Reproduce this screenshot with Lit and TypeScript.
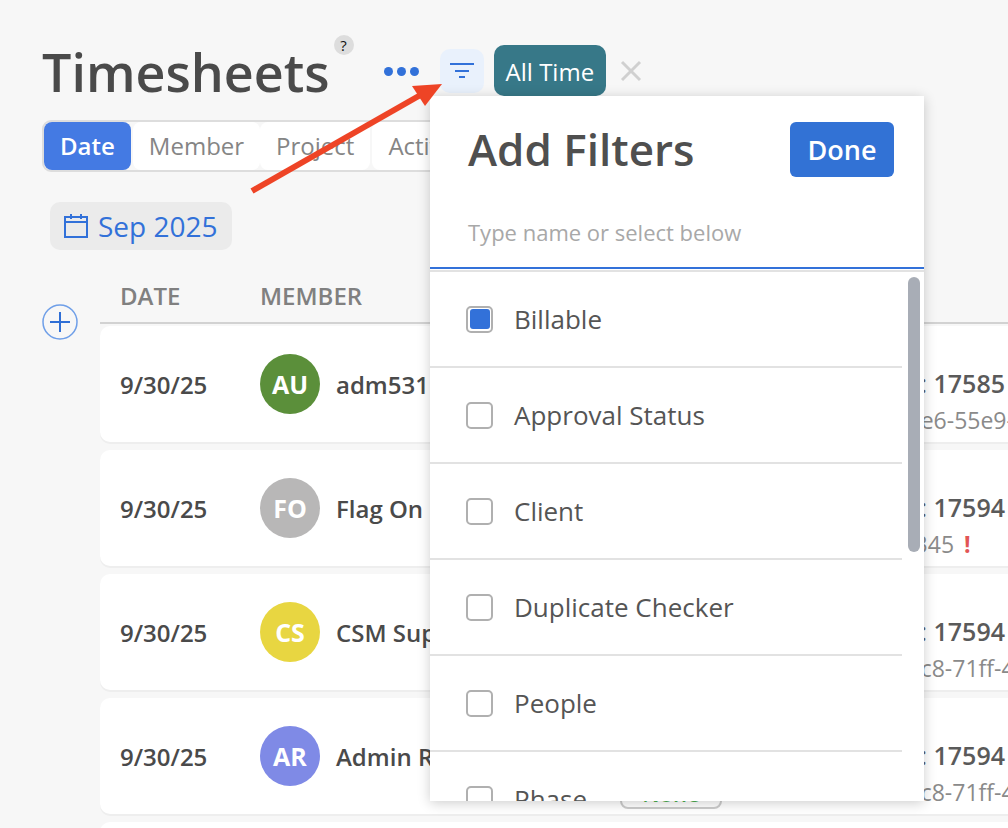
import { LitElement, css, html, svg } from "lit";
import { customElement } from "lit/decorators.js";

const rows = [
    { date: "9/30/25", initials: "AU", color: "#5b8f3a", name: "adm531 User Admin", id: "17585", sub: "Phase: 7d3af1b2ae6-55e9-4b10", flag: false },
    { date: "9/30/25", initials: "FO", color: "#b8b7b7", name: "Flag On User", id: "17594", sub: "Phase: 7d0d8d50345", flag: true },
    { date: "9/30/25", initials: "CS", color: "#e8d641", name: "CSM Support", id: "17594", sub: "Phase: 766a9-bd2c8-71ff-4c21", flag: false },
    { date: "9/30/25", initials: "AR", color: "#7f8ae6", name: "Admin Role", id: "17594", sub: "Phase: 766a9-bd2c8-71ff-4c21", flag: false },
];

const filters = ["Billable", "Approval Status", "Client", "Duplicate Checker", "People", "Phase"];

@customElement("time-row")
export class TimeRow extends LitElement {
    static properties = { row: { attribute: false } };
    row: any;

    static styles = css`
        :host {
            display: flex;
            align-items: center;
            height: 116px;
            flex: none;
            background-color: white;
            border-radius: 10px;
            box-shadow: 0 2px 0 #eeeeee;
            white-space: nowrap;
            color: #4a4a4a;
        }
        .date {
            width: 160px;
            padding-left: 20px;
            box-sizing: border-box;
            font-size: 24px;
            font-weight: 600;
        }
        .avatar {
            width: 60px;
            height: 60px;
            border-radius: 50%;
            display: flex;
            align-items: center;
            justify-content: center;
            color: white;
            font-size: 25px;
            font-weight: 700;
            flex: none;
        }
        .name {
            width: 300px;
            padding-left: 16px;
            box-sizing: border-box;
            font-size: 24px;
            font-weight: 600;
            overflow: hidden;
        }
        .info {
            display: flex;
            flex-direction: column;
            gap: 6px;
            padding-top: 34px;
        }
        .top {
            font-size: 25px;
            line-height: 32px;
            color: #5a5a5a;
        }
        .top span {
            display: inline-block;
            width: 307px;
            text-align: right;
        }
        .top b {
            font-weight: 600;
        }
        .sub {
            display: flex;
            align-items: center;
            gap: 8px;
            font-size: 23px;
            line-height: 30px;
            color: #8a8a8a;
        }
        .tag {
            width: 102px;
            height: 34px;
            margin: -2px 0;
            box-sizing: border-box;
            border: 2px solid #cccccc;
            border-radius: 8px;
            font-size: 22px;
            font-weight: 600;
            line-height: 32px;
            text-align: center;
            color: #4caf50;
        }
        .flag {
            color: #e25555;
            font-weight: 700;
            margin-left: 10px;
        }
    `;

    render() {
        const r = this.row;
        return html`
            <div class="date">${r.date}</div>
            <div class="avatar" style="background-color: ${r.color}">${r.initials}</div>
            <div class="name">${r.name}</div>
            <div class="info">
                <div class="top"><span>Timesheet ID:</span> <b>${r.id}</b></div>
                <div class="sub">
                    <span class="tag">None</span>
                    <span>${r.sub}${r.flag ? html`<span class="flag">!</span>` : ""}</span>
                </div>
            </div>
        `;
    }
}

@customElement("app-root")
export class AppRoot extends LitElement {
    static styles = css`
        :host {
            display: block;
            position: relative;
            height: 828px;
            overflow: hidden;
            background-color: #f7f7f7;
            font-family: "Open Sans", "Noto Sans", sans-serif;
            color: #4a4a4a;
        }
        .page {
            display: flex;
            flex-direction: column;
            padding: 36px 0 0 42px;
        }
        .head {
            display: flex;
            align-items: flex-start;
            height: 84px;
        }
        h1 {
            margin: 0;
            font-size: 52px;
            line-height: 72px;
            font-weight: 600;
            color: #4a4a4a;
        }
        .help {
            width: 20px;
            height: 20px;
            margin: -1px 0 0 4px;
            border-radius: 50%;
            background-color: #dddddd;
            color: #111111;
            font-size: 15px;
            line-height: 20px;
            text-align: center;
            flex: none;
        }
        .dots {
            display: flex;
            gap: 4px;
            margin: 31px 0 0 30px;
        }
        .dots i {
            width: 9px;
            height: 9px;
            border-radius: 50%;
            background-color: #3271d9;
        }
        .filter {
            width: 44px;
            height: 44px;
            margin: 13px 0 0 21px;
            border-radius: 10px;
            background-color: #e9f1fc;
            display: flex;
            align-items: center;
            justify-content: center;
        }
        .chip {
            height: 51px;
            margin: 9px 0 0 10px;
            padding: 0 12px;
            border-radius: 10px;
            background-color: #377888;
            color: white;
            font-size: 24px;
            line-height: 54px;
        }
        .clear {
            margin: 24px 0 0 14px;
        }
        .tabs {
            display: flex;
            align-self: flex-start;
            height: 48px;
            border: 2px solid #dddddd;
            border-radius: 9px;
            font-size: 24px;
            line-height: 48px;
            color: #858585;
            width: 700px;
        }
        .tabs div {
            padding: 0 16px;
            background-color: white;
            border-radius: 8px;
        }
        .tabs div:nth-child(3) {
            margin-right: 2px;
        }
        .tabs .on {
            background-color: #447ae3;
            color: white;
            font-weight: 600;
            margin-right: 2px;
        }
        .month {
            display: flex;
            align-items: center;
            gap: 10px;
            align-self: flex-start;
            height: 48px;
            margin: 30px 0 0 8px;
            padding: 0 14px 0 14px;
            border-radius: 10px;
            background-color: #ebebeb;
            color: #3271d9;
            font-size: 28px;
        }
        .body {
            display: flex;
            margin-top: 30px;
        }
        .plus {
            width: 36px;
            height: 36px;
            margin-top: 24px;
            flex: none;
        }
        .table {
            display: flex;
            flex-direction: column;
            gap: 8px;
            margin-left: 22px;
            width: 1000px;
        }
        .cols {
            display: flex;
            height: 42px;
            margin-bottom: -6px;
            padding-left: 20px;
            border-bottom: 2px solid #d2d2d2;
            font-size: 24px;
            font-weight: 600;
            line-height: 32px;
            color: #808080;
        }
        .cols span {
            width: 140px;
        }
        .pop {
            position: absolute;
            left: 430px;
            top: 96px;
            width: 494px;
            height: 705px;
            display: flex;
            flex-direction: column;
            background-color: white;
            box-shadow: 0 2px 12px rgba(0, 0, 0, 0.2);
            overflow: hidden;
        }
        .pop-head {
            display: flex;
            justify-content: space-between;
            align-items: center;
            padding: 25px 30px 0 38px;
        }
        h2 {
            margin: 0;
            font-size: 44px;
            font-weight: 600;
            line-height: 56px;
            color: #4f4f4f;
        }
        .done {
            width: 104px;
            height: 55px;
            border-radius: 6px;
            background-color: #3272d5;
            color: white;
            font-size: 27px;
            font-weight: 600;
            line-height: 55px;
            text-align: center;
        }
        .search {
            height: 56px;
            margin-top: 34px;
            padding-left: 38px;
            border-bottom: 2px solid #3271d9;
            font-size: 22px;
            line-height: 42px;
            color: #a8a8a8;
            flex: none;
        }
        .list {
            display: flex;
            flex: 1;
            min-height: 0;
            margin-top: 1px;
            border-top: 2px solid #e2e2e2;
        }
        .items {
            width: 472px;
            flex: none;
        }
        .item {
            display: flex;
            align-items: center;
            gap: 21px;
            height: 94px;
            padding-left: 36px;
            border-bottom: 2px solid #e2e2e2;
            font-size: 26px;
            color: #555555;
        }
        .box {
            width: 27px;
            height: 27px;
            box-sizing: border-box;
            border: 2px solid #b0b0b0;
            border-radius: 5px;
            flex: none;
        }
        .box.on {
            padding: 1.5px;
        }
        .box.on i {
            display: block;
            height: 100%;
            border-radius: 3px;
            background-color: #3271d9;
        }
        .thumb {
            width: 12px;
            height: 275px;
            margin: 5px 0 0 6px;
            border-radius: 6px;
            background-color: #a8adb6;
        }
        .arrow {
            position: absolute;
            left: 240px;
            top: 70px;
        }
    `;

    render() {
        return html`
            <div class="page">
                <div class="head">
                    <h1>Timesheets</h1>
                    <div class="help">?</div>
                    <div class="dots"><i></i><i></i><i></i></div>
                    <div class="filter">
                        <svg width="24" height="18" viewBox="0 0 24 18" fill="#3271d9">
                            <rect x="0" y="1" width="24" height="2" />
                            <rect x="5" y="8" width="14" height="2" />
                            <rect x="9" y="14" width="6" height="2" />
                        </svg>
                    </div>
                    <div class="chip">All Time</div>
                    <svg class="clear" width="22" height="22" viewBox="0 0 22 22" stroke="#d0d0d0" stroke-width="3">
                        <path d="M2 2L20 20M20 2L2 20" />
                    </svg>
                </div>
                <div class="tabs">
                    <div class="on">Date</div>
                    <div>Member</div>
                    <div>Project</div>
                    <div>Activity</div>
                </div>
                <div class="month">
                    <svg width="24" height="24" viewBox="0 0 24 24" fill="none" stroke="#3271d9" stroke-width="2">
                        <rect x="1" y="3" width="22" height="20" />
                        <path d="M1 8H23M7 0V5M17 0V5" />
                    </svg>
                    Sep 2025
                </div>
                <div class="body">
                    <svg class="plus" viewBox="0 0 36 36" fill="none">
                        <circle cx="18" cy="18" r="17" stroke="#6f9fe8" stroke-width="1.5" />
                        <path d="M18 8V28M8 18H28" stroke="#2f6fd6" stroke-width="2" />
                    </svg>
                    <div class="table">
                        <div class="cols"><span>DATE</span><span>MEMBER</span></div>
                        ${rows.map((r) => html`<time-row .row=${r}></time-row>`)}
                        <time-row .row=${rows[0]}></time-row>
                    </div>
                </div>
            </div>
            <div class="pop">
                <div class="pop-head">
                    <h2>Add Filters</h2>
                    <div class="done">Done</div>
                </div>
                <div class="search">Type name or select below</div>
                <div class="list">
                    <div class="items">
                        ${filters.map(
                            (f, i) => html`
                                <div class="item">
                                    <div class="box ${i === 0 ? "on" : ""}">${i === 0 ? html`<i></i>` : ""}</div>
                                    ${f}
                                </div>
                            `
                        )}
                    </div>
                    <div class="thumb"></div>
                </div>
            </div>
            <svg class="arrow" width="210" height="130" viewBox="240 70 210 130">
                ${svg`<path d="M252 191L424 93" stroke="#ee4426" stroke-width="6" />
                <path d="M412 86L442 84L425 106Z" fill="#ee4426" />`}
            </svg>
        `;
    }
}
